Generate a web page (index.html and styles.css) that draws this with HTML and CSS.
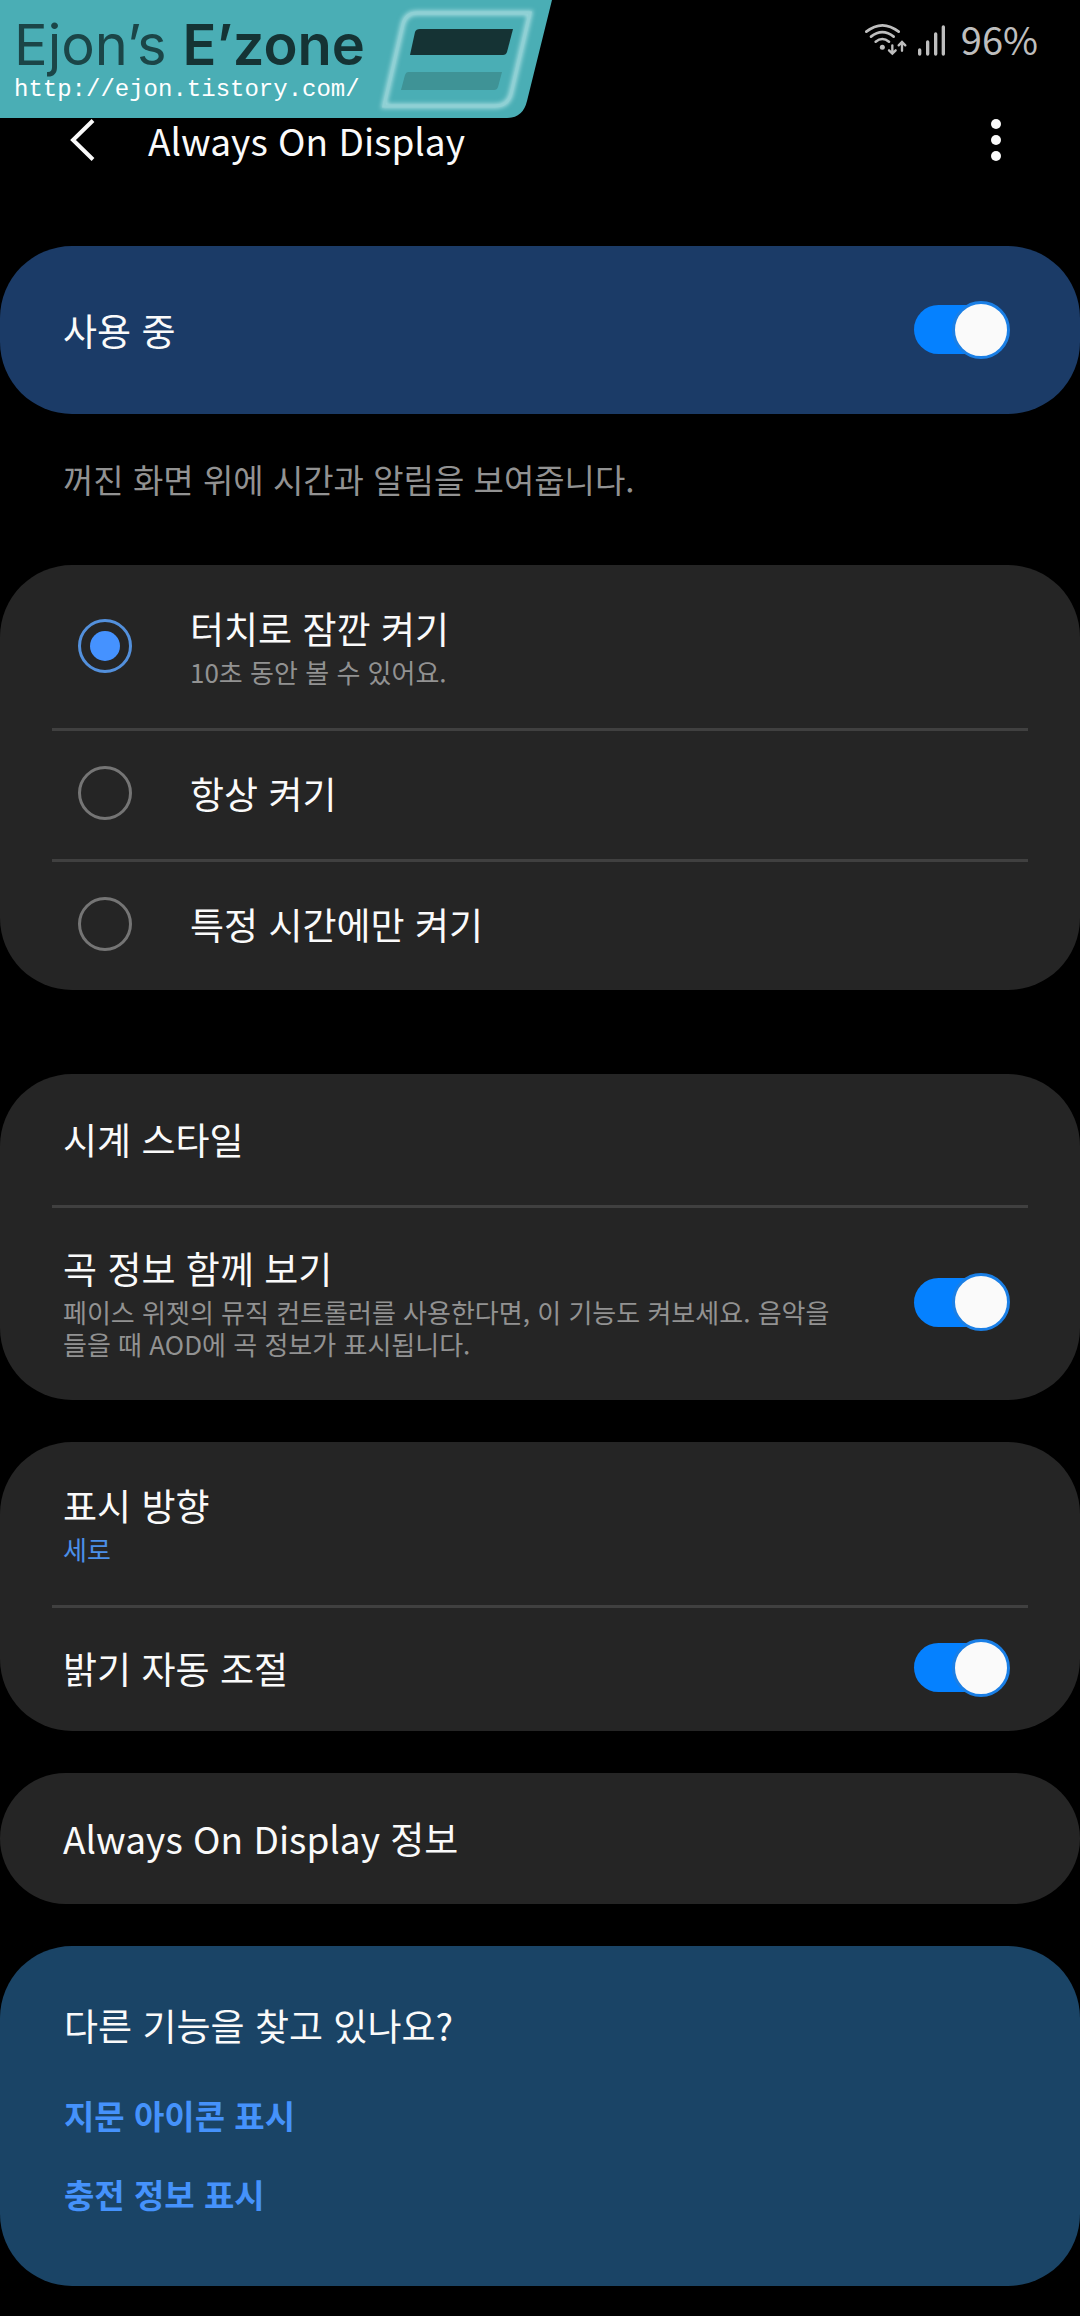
FILE: index.html
```html
<!DOCTYPE html>
<html lang="ko">
<head>
<meta charset="utf-8">
<meta name="viewport" content="width=device-width, initial-scale=1">
<title>Always On Display</title>
<link rel="stylesheet" href="styles.css">
</head>
<body>
<div class="screen">
  <div class="status-bar">
    <svg class="status-icons" viewBox="69 66 252 105" aria-hidden="true">
      <g fill="none" stroke="currentColor" stroke-width="8" stroke-linecap="round">
        <path d="M79 95 Q127 57 176 95"/>
        <path d="M93 110 Q127 83 161 110"/>
        <path d="M107 125 Q127 109 147 125"/>
        <path d="M157 136V160M147 151l10 10 10-10" stroke-width="7"/>
        <path d="M186 152V128M176 136l10-10 10 10" stroke-width="7"/>
        <path d="M239 150v12M263 126v36M287 102v60M310 81v81" stroke-width="10"/>
      </g>
      <circle cx="127" cy="142" r="7.500" fill="currentColor"/>
    </svg>
    <span class="battery">96%</span>
  </div>

  <header class="app-bar">
    <button class="icon-button" type="button" aria-label="뒤로">
      <svg class="back-icon" viewBox="0 0 26 44"><path d="M23 2.500 3 22l20 19.500" fill="none" stroke="currentColor" stroke-width="4"/></svg>
    </button>
    <h1 class="app-title">Always On Display</h1>
    <button class="icon-button" type="button" aria-label="옵션 더보기">
      <svg class="more-icon" viewBox="0 0 10 44" fill="currentColor"><circle cx="5" cy="6" r="5"/><circle cx="5" cy="22" r="5"/><circle cx="5" cy="38" r="5"/></svg>
    </button>
  </header>

  <a class="banner" href="#blog">
    <svg class="banner-art" viewBox="0 0 552 118" aria-hidden="true">
      <defs><filter id="glow" x="-10%" y="-15%" width="120%" height="130%"><feGaussianBlur stdDeviation="2"/></filter></defs>
      <path d="M0 0H552L527 101Q523 118 507 118H0Z" fill="#4aaeb5"/>
      <path d="M417 13H530L511 94Q508 106 495 106H384L403 24Q406 13 417 13Z" fill="none" stroke="#a5dcdf" stroke-width="5" filter="url(#glow)"/>
      <path d="M417 13H530L511 94Q508 106 495 106H384L403 24Q406 13 417 13Z" fill="none" stroke="#8fd0d4" stroke-width="3"/>
      <path d="M420 29H513L507 52Q506 55 503 55H410L415 32Q416 29 420 29Z" fill="#153334"/>
      <path d="M408 72H502L498 87Q497 90 494 90H401L405 75Q406 72 408 72Z" fill="#3f9396"/>
    </svg>
    <span class="banner-name">Ejon’s <b>E’zone</b></span>
    <span class="banner-url">http://ejon.tistory.com/</span>
  </a>

  <main class="settings">
    <section class="card card-master">
      <label class="row row-master">
        <span class="row-title">사용 중</span>
        <input class="switch" type="checkbox" role="switch" checked>
      </label>
    </section>

    <p class="description">꺼진 화면 위에 시간과 알림을 보여줍니다.</p>

    <section class="card card-modes">
      <label class="row row-radio row-tall">
        <input class="radio" type="radio" name="mode" checked>
        <span class="row-text">
          <span class="row-title">터치로 잠깐 켜기</span>
          <span class="row-note">10초 동안 볼 수 있어요.</span>
        </span>
      </label>
      <label class="row row-radio">
        <input class="radio" type="radio" name="mode">
        <span class="row-title">항상 켜기</span>
      </label>
      <label class="row row-radio">
        <input class="radio" type="radio" name="mode">
        <span class="row-title">특정 시간에만 켜기</span>
      </label>
    </section>

    <section class="card">
      <button class="row" type="button"><span class="row-title">시계 스타일</span></button>
      <label class="row row-long">
        <span class="row-text">
          <span class="row-title">곡 정보 함께 보기</span>
          <span class="row-note">페이스 위젯의 뮤직 컨트롤러를 사용한다면, 이 기능도 켜보세요. 음악을 들을 때 AOD에 곡 정보가 표시됩니다.</span>
        </span>
        <input class="switch" type="checkbox" role="switch" checked>
      </label>
    </section>

    <section class="card">
      <button class="row row-tall" type="button">
        <span class="row-text">
          <span class="row-title">표시 방향</span>
          <span class="row-note row-value">세로</span>
        </span>
      </button>
      <label class="row row-short">
        <span class="row-title">밝기 자동 조절</span>
        <input class="switch" type="checkbox" role="switch" checked>
      </label>
    </section>

    <section class="card">
      <button class="row" type="button"><span class="row-title">Always On Display 정보</span></button>
    </section>

    <section class="card card-related">
      <h2 class="row-title">다른 기능을 찾고 있나요?</h2>
      <a class="related-link" href="#fingerprint">지문 아이콘 표시</a>
      <a class="related-link" href="#charging">충전 정보 표시</a>
    </section>
  </main>
</div>
</body>
</html>
```
FILE: styles.css
```css
*,
*::before,
*::after {
  box-sizing: border-box;
}

body {
  margin: 0;
  background: #000;
  color: #fafafa;
  font-family: "Noto Sans CJK KR", "Noto Sans", sans-serif;
}

button {
  border: 0;
  background: none;
  color: inherit;
  font: inherit;
  text-align: left;
}

input {
  appearance: none;
  flex: none;
  margin: 0;
}

.screen {
  position: relative;
  padding-bottom: 30px;
}

/* Status bar */
.status-bar {
  display: flex;
  justify-content: flex-end;
  align-items: center;
  gap: 14px;
  height: 78px;
  padding-right: 42px;
  color: #bebebe;
}

.status-icons {
  width: 84px;
  height: 35px;
}

.battery {
  font-size: 38px;
  line-height: 40px;
}

/* App bar */
.app-bar {
  display: flex;
  align-items: center;
  height: 124px;
  padding: 0 59px 0 58px;
}

.icon-button {
  display: flex;
  justify-content: center;
  align-items: center;
  width: 50px;
  height: 60px;
  padding: 0;
}

.back-icon {
  width: 26px;
  height: 44px;
}

.more-icon {
  width: 10px;
  height: 44px;
}

.app-title {
  flex: 1;
  margin: 0;
  padding-left: 40px;
  font-size: 37px;
  font-weight: 400;
  line-height: 48px;
}

/* Blog banner over the top left corner */
.banner {
  position: absolute;
  top: 0;
  left: 0;
  display: flex;
  flex-direction: column;
  width: 552px;
  height: 118px;
  padding: 14px 0 0 14px;
  color: #fff;
  text-decoration: none;
}

.banner-art {
  position: absolute;
  inset: 0;
  z-index: -1;
}

.banner-name {
  color: #1b4547;
  font: 400 56px/62px Inter, sans-serif;
}

.banner-name b {
  color: #153334;
  font-weight: 600;
}

.banner-url {
  font: 24px/28px "Liberation Mono", monospace;
}

/* Cards */
.settings {
  display: flex;
  flex-direction: column;
  gap: 42px;
  padding-top: 44px;
}

.card {
  border-radius: 72px;
  background: #252525;
}

.card-master {
  background: #1b3b67;
}

.card-modes {
  margin-bottom: 42px;
}

.card-related {
  display: flex;
  flex-direction: column;
  align-items: flex-start;
  padding: 55px 64px 68px;
  background: #1a4466;
}

.description {
  margin: 0;
  padding: 0 63px 21px;
  color: #929292;
  font-size: 33px;
  line-height: 46px;
}

.row {
  display: flex;
  justify-content: space-between;
  align-items: center;
  width: 100%;
  min-height: 131px;
  padding: 0 70px 1px 63px;
}

.row + .row {
  background: linear-gradient(#404040, #404040) center top / calc(100% - 104px) 3px no-repeat;
}

.row-master {
  min-height: 168px;
}

.row-tall {
  min-height: 163px;
}

.row-long {
  min-height: 195px;
}

.row-short {
  min-height: 126px;
}

.row-radio {
  justify-content: flex-start;
  gap: 58px;
  padding-left: 78px;
}

.row-text {
  display: flex;
  flex-direction: column;
  gap: 4px;
  max-width: 780px;
}

.row-title {
  margin: 0;
  font-size: 37px;
  font-weight: 400;
  line-height: 48px;
}

.row-note {
  color: #929292;
  font-size: 26px;
  line-height: 32px;
}

.row-value {
  color: #4b8fe8;
}

.related-link {
  margin-top: 31px;
  color: #4592fb;
  font-size: 33px;
  font-weight: 700;
  line-height: 48px;
  text-decoration: none;
}

.row-title + .related-link {
  margin-top: 42px;
}

/* Controls */
.switch {
  position: relative;
  display: flex;
  align-items: center;
  width: 96px;
  height: 58px;
}

.switch::before {
  content: "";
  width: 90px;
  height: 49px;
  border-radius: 25px;
  background: #0581ff;
}

.switch::after {
  content: "";
  position: absolute;
  top: 0;
  right: 0;
  width: 58px;
  height: 58px;
  border: 3px solid #1a7fe6;
  border-radius: 50%;
  background: #fafafa;
}

.radio {
  display: grid;
  place-items: center;
  width: 54px;
  height: 54px;
  border: 3px solid #757575;
  border-radius: 50%;
}

.radio:checked {
  border-color: #5390dc;
}

.radio:checked::before {
  content: "";
  width: 30px;
  height: 30px;
  border-radius: 50%;
  background: #4592ff;
}
```
